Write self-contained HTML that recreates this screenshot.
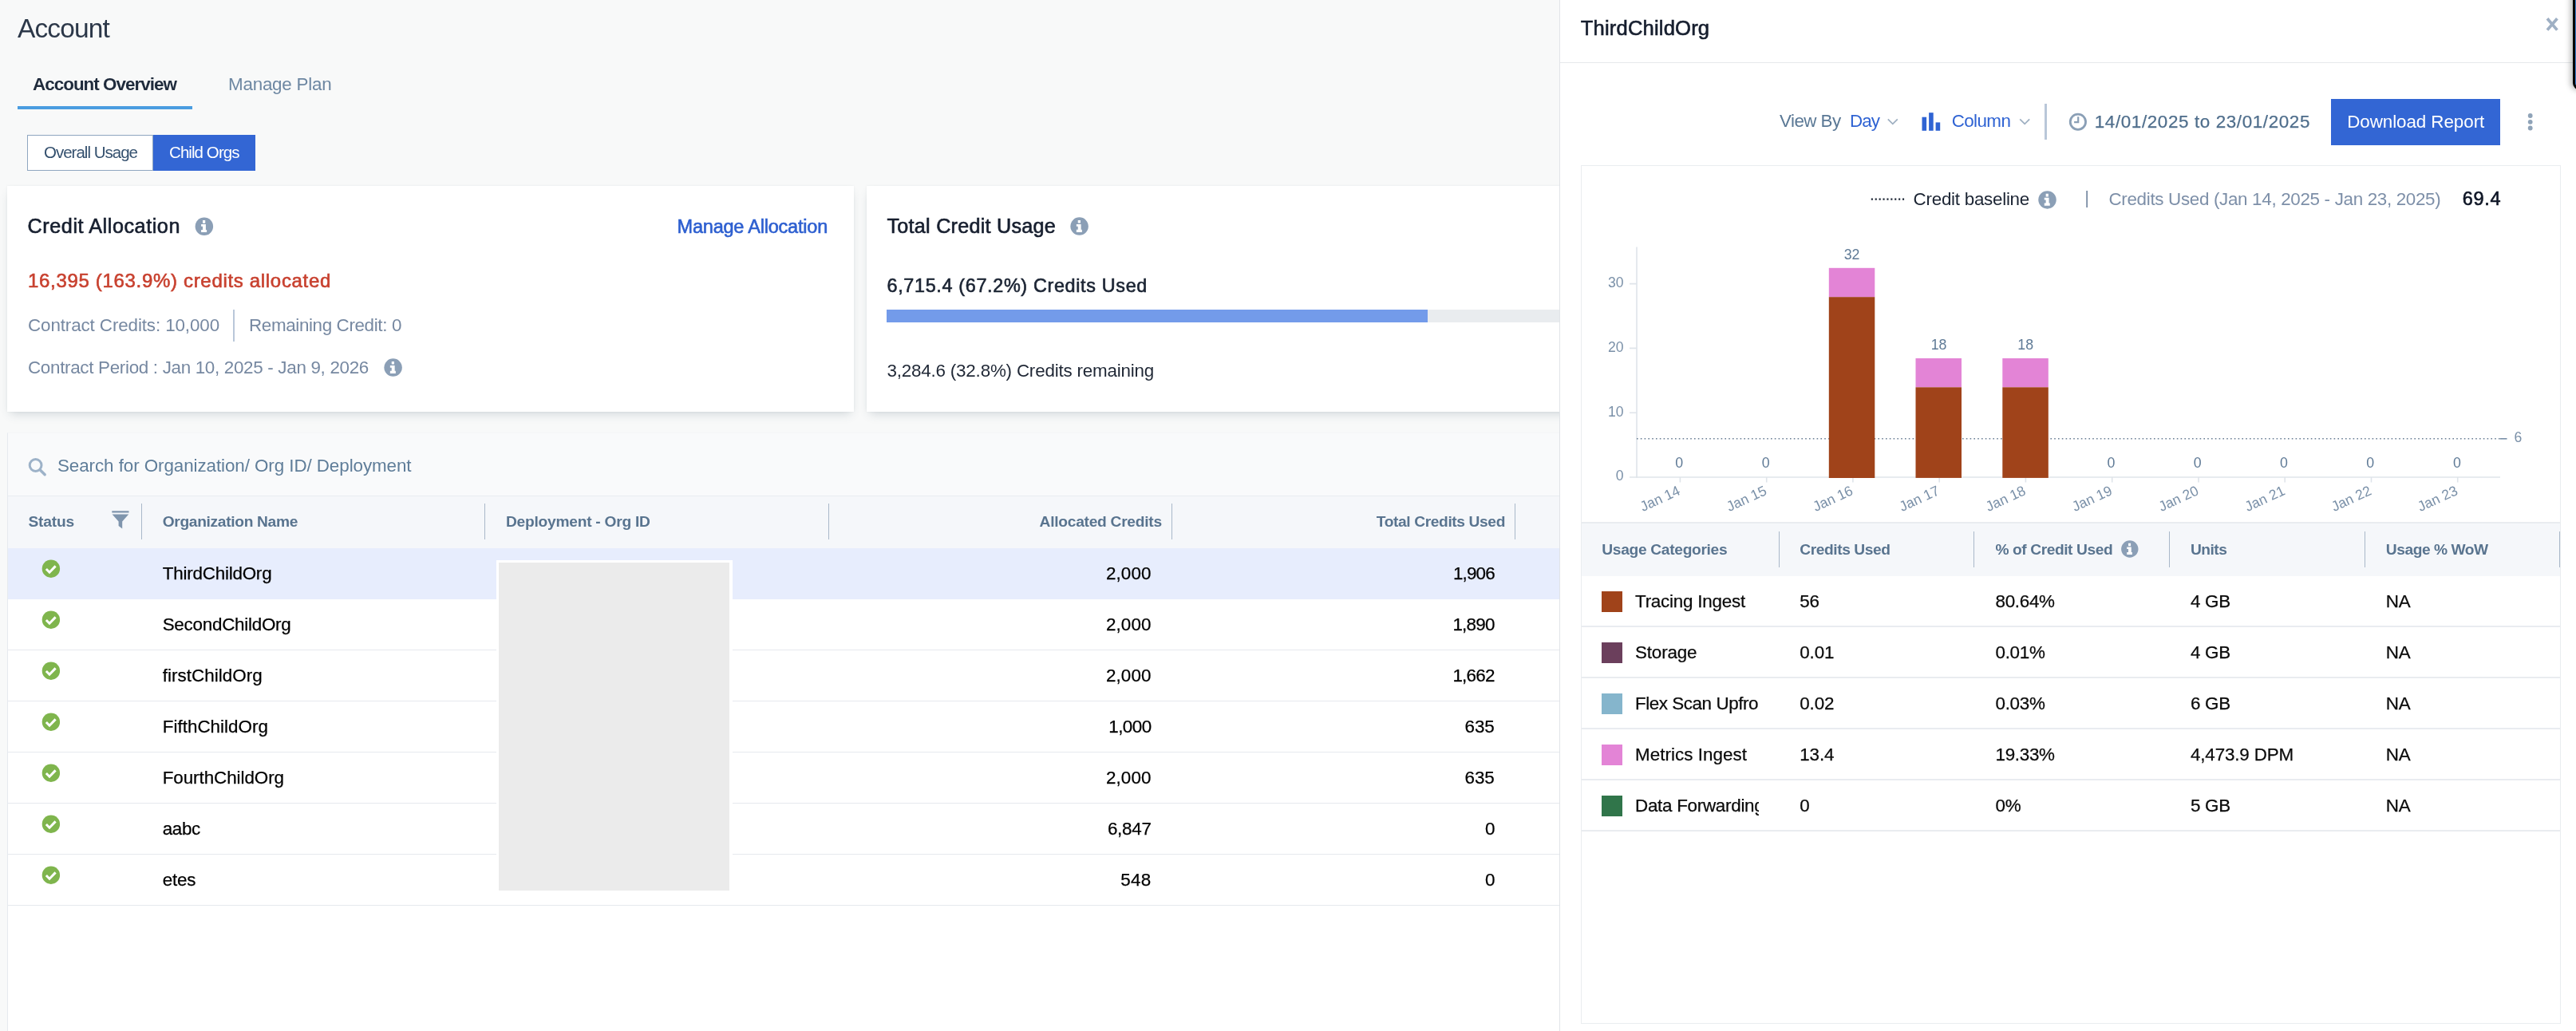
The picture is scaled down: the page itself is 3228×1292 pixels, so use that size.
<!DOCTYPE html>
<html><head><meta charset="utf-8"><title>Account</title>
<style>
html,body{margin:0;padding:0;width:3228px;height:1292px;overflow:hidden;}
body{width:3228px;height:1292px;position:relative;overflow:hidden;background:#f8f9f9;font-family:"Liberation Sans",sans-serif;}
.a{position:absolute;}
.t{position:absolute;white-space:nowrap;font-family:"Liberation Sans",sans-serif;}
svg{position:absolute;overflow:visible;}
.card{position:absolute;background:#fff;box-shadow:0 6px 12px -4px rgba(60,80,100,0.22),0 0 3px rgba(60,80,100,0.07);}
.hl{position:absolute;height:1px;background:#e6e9ee;}
.vd{position:absolute;width:1px;background:#a9b8c9;}
#wrap{position:absolute;left:0;top:0;width:3228px;height:1292px;overflow:hidden;will-change:transform;}

</style></head>
<body>
<div id="wrap">
<!-- tabs -->
<div class="a" style="left:22px;top:133px;width:219px;height:4px;background:#4a9de0;"></div>
<!-- toggle -->
<div class="a" style="left:34px;top:169px;width:157.5px;height:44.5px;box-sizing:border-box;border:1.6px solid #8fa6c0;background:#fff;"></div>
<div class="a" style="left:191.5px;top:169px;width:128px;height:44.5px;background:#3366d4;"></div>
<!-- cards -->
<div class="card" style="left:9px;top:233px;width:1061px;height:283px;"></div>
<div class="card" style="left:1086px;top:233px;width:900px;height:283px;"></div>
<!-- card1 divider -->
<div class="a" style="left:291.8px;top:388px;width:2.6px;height:39.5px;background:#b9c7d9;"></div>
<!-- progress -->
<div class="a" style="left:1111px;top:388px;width:850px;height:15.5px;background:#e9ecef;"></div>
<div class="a" style="left:1111px;top:388px;width:678px;height:15.5px;background:#739bea;"></div>
<!-- table -->
<div class="a" style="left:9px;top:542px;width:1950px;height:750px;background:#f9fafb;border-left:1px solid #e6eaef;border-top:1px solid #f5f6f8;"></div>
<div class="a" style="left:10px;top:621px;width:1950px;height:66px;background:#f5f7fa;border-top:1.6px solid #e9ecf0;box-sizing:border-box;"></div>
<div class="a" style="left:10px;top:687px;width:1950px;height:605px;background:#fff;"></div>
<div class="a" style="left:10px;top:687px;width:1950px;height:64px;background:#e7edfd;"></div>
<div class="hl" style="left:10px;top:814px;width:1950px;"></div>
<div class="hl" style="left:10px;top:878px;width:1950px;"></div>
<div class="hl" style="left:10px;top:942px;width:1950px;"></div>
<div class="hl" style="left:10px;top:1006px;width:1950px;"></div>
<div class="hl" style="left:10px;top:1070px;width:1950px;"></div>
<div class="hl" style="left:10px;top:1134px;width:1950px;"></div>
<!-- header dividers -->
<div class="vd" style="left:176.5px;top:631px;height:45px;"></div>
<div class="vd" style="left:606.8px;top:631px;height:45px;"></div>
<div class="vd" style="left:1037.5px;top:631px;height:45px;"></div>
<div class="vd" style="left:1467.5px;top:631px;height:45px;"></div>
<div class="vd" style="left:1897.8px;top:631px;height:45px;"></div>
<!-- redaction box -->
<div class="a" style="left:621.5px;top:702px;width:296px;height:417px;background:#fff;"></div>
<div class="a" style="left:625px;top:705px;width:289px;height:411px;background:#ebebeb;"></div>

<!-- right panel -->
<div class="a" style="left:1954px;top:0;width:1275px;height:1292px;background:#fff;border-left:1px solid #e1e4e8;"></div>
<div class="hl" style="left:1955px;top:77.7px;width:1269px;background:#e6e9ec;"></div>
<!-- dark corner artifact -->
<div class="a" style="left:3224px;top:-20px;width:30px;height:133px;box-sizing:border-box;background:#3b7fd0;border:3px solid #000;border-radius:9px;box-shadow:-3px 0 7px rgba(0,0,0,0.28);"></div>
<!-- toolbar divider -->
<div class="a" style="left:2562px;top:130.4px;width:2.6px;height:44.2px;background:#b9c7d9;"></div>
<!-- button -->
<div class="a" style="left:2921px;top:124px;width:212px;height:57.8px;background:#3366d4;"></div>
<!-- chart box -->
<div class="a" style="left:1981px;top:207px;width:1227.5px;height:1075.5px;box-sizing:border-box;border:1px solid #eaedf0;background:#fff;"></div>
<!-- panel table -->
<div class="a" style="left:1982px;top:654px;width:1225.5px;height:67.5px;background:#f5f7fa;border-top:2px solid #e9ecf0;box-sizing:border-box;"></div>
<div class="vd" style="left:2228.7px;top:666px;height:44.5px;"></div>
<div class="vd" style="left:2473.4px;top:666px;height:44.5px;"></div>
<div class="vd" style="left:2718.1px;top:666px;height:44.5px;"></div>
<div class="vd" style="left:2962.8px;top:666px;height:44.5px;"></div>
<div class="vd" style="left:3207px;top:666px;height:44.5px;"></div>
<div class="hl" style="left:1982px;top:784px;width:1225.5px;height:2px;background:#e9ecf0;"></div>
<div class="hl" style="left:1982px;top:848px;width:1225.5px;height:2px;background:#e9ecf0;"></div>
<div class="hl" style="left:1982px;top:912px;width:1225.5px;height:2px;background:#e9ecf0;"></div>
<div class="hl" style="left:1982px;top:976px;width:1225.5px;height:2px;background:#e9ecf0;"></div>
<div class="hl" style="left:1982px;top:1040px;width:1225.5px;height:2px;background:#e9ecf0;"></div>
<div class="a" style="left:2006.8px;top:741px;width:26px;height:26px;background:#a0431a;"></div>
<div class="a" style="left:2006.8px;top:805px;width:26px;height:26px;background:#6b3f5c;"></div>
<div class="a" style="left:2006.8px;top:869px;width:26px;height:26px;background:#85b5cc;"></div>
<div class="a" style="left:2006.8px;top:933px;width:26px;height:26px;background:#e384d6;"></div>
<div class="a" style="left:2006.8px;top:997px;width:26px;height:26px;background:#30754a;"></div>

<!-- main svg: icons + chart -->
<svg width="3228" height="1292" viewBox="0 0 3228 1292" style="left:0;top:0;">
<defs>
 <g id="info"><circle r="11.25" fill="#8b9fb6"/><path d="M-3.75 -2.6H2.05V4.2H3.25V7.4H-3.75V4.2H-1.85V0.1H-3.75ZM-1.85 -7.7H1.35V-4H-1.85Z" fill="#fff"/></g>
 <g id="chk"><circle r="11.2" fill="#7fb54d"/><path d="M-6 0.3l4.1 4.2 7.6-7.8" fill="none" stroke="#fff" stroke-width="3"/></g>
 <g id="chev"><path d="M-6 -3.2l6 6 6-6" fill="none" stroke="#9fb0c2" stroke-width="1.8"/></g>
</defs>
<use href="#info" x="255.85" y="283.7"/>
<use href="#info" x="492.6" y="460.6"/>
<use href="#info" x="1352.6" y="283.6"/>
<use href="#info" x="2565.5" y="250.4"/>
<use href="#info" x="2668.8" y="688" transform="translate(2668.8 688) scale(0.95) translate(-2668.8 -688)"/>
<!-- search icon -->
<circle cx="44.6" cy="583" r="7.4" fill="none" stroke="#9db2c8" stroke-width="3"/>
<path d="M50.4 589l5.8 5.8" stroke="#9db2c8" stroke-width="3.4" stroke-linecap="round"/>
<!-- filter icon -->
<path d="M140.3 640.2h21.2v2.2h-21.2zM140.6 644.4h20.6l-8 9v9.2l-4.6-3.6v-5.6z" fill="#7f95ad"/>
<!-- checks -->
<use href="#chk" x="63.9" y="712.7"/>
<use href="#chk" x="63.9" y="776.7"/>
<use href="#chk" x="63.9" y="840.7"/>
<use href="#chk" x="63.9" y="904.7"/>
<use href="#chk" x="63.9" y="968.7"/>
<use href="#chk" x="63.9" y="1032.7"/>
<use href="#chk" x="63.9" y="1096.7"/>
<!-- close X -->
<path d="M3192 23.2l12.4 14.4M3204.4 23.2l-12.4 14.4" stroke="#9fb0c4" stroke-width="3.7"/>
<!-- chevrons -->
<use href="#chev" x="2371.8" y="152.5"/>
<use href="#chev" x="2537.2" y="152.5"/>
<!-- column icon -->
<rect x="2408.5" y="146.7" width="5.6" height="17.1" fill="#2f63d3"/>
<rect x="2417.1" y="141.2" width="5.6" height="22.6" fill="#2f63d3"/>
<rect x="2425.6" y="153.4" width="5.6" height="10.4" fill="#2f63d3"/>
<!-- clock -->
<circle cx="2603.9" cy="152.7" r="9.65" fill="none" stroke="#8a9fb6" stroke-width="2.8"/>
<path d="M2604.2 146.3V153.1H2599.1" fill="none" stroke="#8a9fb6" stroke-width="2.2"/>
<!-- kebab -->
<circle cx="3170.7" cy="145" r="2.9" fill="#8fa3b8"/><circle cx="3170.7" cy="152.8" r="2.9" fill="#8fa3b8"/><circle cx="3170.7" cy="160.5" r="2.9" fill="#8fa3b8"/>
<!-- legend -->
<path d="M2344.8 249.6H2386.5" stroke="#1b2433" stroke-width="2.2" stroke-dasharray="2.1 2.8"/>
<rect x="2614.3" y="239" width="1.7" height="21" fill="#7688a1"/>
<!-- chart -->
<g id="chart">
<path d="M2051 309.5V598.8" stroke="#dfe4ea" stroke-width="1.6"/>
<path d="M2042 598H3133" stroke="#dfe4ea" stroke-width="1.6"/>
<path d="M2042 355.6h9M2042 436.4h9M2042 517.2h9" stroke="#dfe4ea" stroke-width="1.6"/>
<g stroke="#dfe4ea" stroke-width="1.6"><path d="M2105.4 598v6.5M2213.7 598v6.5M2321.9 598v6.5M2430.2 598v6.5M2538.4 598v6.5M2646.7 598v6.5M2755.0 598v6.5M2863.2 598v6.5M2971.5 598v6.5M3079.7 598v6.5"/></g>
<path d="M2051 549.8H3133" stroke="#6b7f95" stroke-width="1.5" stroke-dasharray="1.6 3.2"/>
<path d="M3133 549.8h8.5" stroke="#7a90a8" stroke-width="1.6"/>
<rect x="2291.8" y="335.8" width="57.5" height="36.4" fill="#e384d6"/>
<rect x="2291.8" y="372.2" width="57.5" height="226.8" fill="#a0431a"/>
<rect x="2400.5" y="449" width="57.5" height="36.3" fill="#e384d6"/>
<rect x="2400.5" y="485.3" width="57.5" height="113.6" fill="#a0431a"/>
<rect x="2509.3" y="449" width="57.5" height="36.3" fill="#e384d6"/>
<rect x="2509.3" y="485.3" width="57.5" height="113.6" fill="#a0431a"/>
<g font-family="Liberation Sans, sans-serif" font-size="17.8" fill="#5f7a96" text-anchor="middle">
<text x="2320.6" y="324.8">32</text><text x="2429.6" y="437.8">18</text><text x="2538.2" y="437.8">18</text>
<text x="2104.3" y="586">0</text><text x="2212.8" y="586">0</text>
<text x="2645.4" y="586">0</text><text x="2753.7" y="586">0</text><text x="2861.9" y="586">0</text><text x="2970.2" y="586">0</text><text x="3078.9" y="586">0</text>
</g>
<g font-family="Liberation Sans, sans-serif" font-size="17.6" fill="#7a90a8" text-anchor="end">
<text transform="translate(2106.7 619) rotate(-25)">Jan 14</text>
<text transform="translate(2215.0 619) rotate(-25)">Jan 15</text>
<text transform="translate(2323.2 619) rotate(-25)">Jan 16</text>
<text transform="translate(2431.5 619) rotate(-25)">Jan 17</text>
<text transform="translate(2539.7 619) rotate(-25)">Jan 18</text>
<text transform="translate(2648.0 619) rotate(-25)">Jan 19</text>
<text transform="translate(2756.3 619) rotate(-25)">Jan 20</text>
<text transform="translate(2864.5 619) rotate(-25)">Jan 21</text>
<text transform="translate(2972.8 619) rotate(-25)">Jan 22</text>
<text transform="translate(3081.0 619) rotate(-25)">Jan 23</text>
</g>
</g>
</svg>

<span class="t" id="t0" style="font-size:33.5px;line-height:33.5px;top:18.94px;color:#2c3849;letter-spacing:-0.864px;left:22.00px;">Account</span>
<span class="t" id="t1" style="font-size:22.4px;line-height:22.4px;top:95.24px;color:#1f2b3c;font-weight:700;letter-spacing:-0.961px;left:41.00px;">Account Overview</span>
<span class="t" id="t2" style="font-size:22.4px;line-height:22.4px;top:95.24px;color:#6d87a2;letter-spacing:-0.223px;left:286.00px;">Manage Plan</span>
<span class="t" id="t3" style="font-size:20.5px;line-height:20.5px;top:180.95px;color:#34506e;letter-spacing:-0.992px;left:55.00px;">Overall Usage</span>
<span class="t" id="t4" style="font-size:20.5px;line-height:20.5px;top:180.95px;color:#ffffff;letter-spacing:-0.924px;left:212.00px;">Child Orgs</span>
<span class="t" id="t5" style="font-size:25.2px;line-height:25.2px;top:271.47px;color:#161e2e;-webkit-text-stroke:0.62px #161e2e;letter-spacing:0.552px;left:34.60px;">Credit Allocation</span>
<span class="t" id="t6" style="font-size:23.5px;line-height:23.5px;top:272.71px;color:#2d5fd0;-webkit-text-stroke:0.62px #2d5fd0;letter-spacing:-0.215px;left:848.60px;">Manage Allocation</span>
<span class="t" id="t7" style="font-size:24px;line-height:24px;top:340.28px;color:#c8412f;-webkit-text-stroke:0.62px #c8412f;letter-spacing:0.680px;left:35.00px;">16,395 (163.9%) credits allocated</span>
<span class="t" id="t8" style="font-size:22.4px;line-height:22.4px;top:397.34px;color:#7688a1;letter-spacing:-0.113px;left:35.00px;">Contract Credits: 10,000</span>
<span class="t" id="t9" style="font-size:22.4px;line-height:22.4px;top:397.34px;color:#7688a1;letter-spacing:-0.363px;left:312.00px;">Remaining Credit: 0</span>
<span class="t" id="t10" style="font-size:22.4px;line-height:22.4px;top:449.84px;color:#7688a1;letter-spacing:-0.310px;left:35.00px;">Contract Period : Jan 10, 2025 - Jan 9, 2026</span>
<span class="t" id="t11" style="font-size:25.2px;line-height:25.2px;top:271.47px;color:#161e2e;-webkit-text-stroke:0.62px #161e2e;letter-spacing:0.239px;left:1111.50px;">Total Credit Usage</span>
<span class="t" id="t12" style="font-size:23.4px;line-height:23.4px;top:346.99px;color:#1b2433;-webkit-text-stroke:0.62px #1b2433;letter-spacing:0.656px;left:1111.50px;">6,715.4 (67.2%) Credits Used</span>
<span class="t" id="t13" style="font-size:22.4px;line-height:22.4px;top:454.34px;color:#1f2735;letter-spacing:-0.197px;left:1111.50px;">3,284.6 (32.8%) Credits remaining</span>
<span class="t" id="t14" style="font-size:22.4px;line-height:22.4px;top:573.24px;color:#5f7d99;letter-spacing:-0.076px;left:72.00px;">Search for Organization/ Org ID/ Deployment</span>
<span class="t" id="t15" style="font-size:19.2px;line-height:19.2px;top:643.85px;color:#59748f;font-weight:700;letter-spacing:-0.190px;left:35.50px;">Status</span>
<span class="t" id="t16" style="font-size:19.2px;line-height:19.2px;top:643.85px;color:#59748f;font-weight:700;letter-spacing:-0.327px;left:203.70px;">Organization Name</span>
<span class="t" id="t17" style="font-size:19.2px;line-height:19.2px;top:643.85px;color:#59748f;font-weight:700;letter-spacing:-0.253px;left:634.00px;">Deployment - Org ID</span>
<span class="t" id="t18" style="font-size:19.2px;line-height:19.2px;top:643.85px;color:#59748f;font-weight:700;letter-spacing:-0.271px;left:1302.60px;">Allocated Credits</span>
<span class="t" id="t19" style="font-size:19.2px;line-height:19.2px;top:643.85px;color:#59748f;font-weight:700;letter-spacing:-0.384px;left:1724.80px;">Total Credits Used</span>
<span class="t" id="t20" style="font-size:22.4px;line-height:22.4px;top:707.64px;color:#000;-webkit-text-stroke:0.25px #000;letter-spacing:-0.206px;left:203.70px;">ThirdChildOrg</span>
<span class="t" id="t21" style="font-size:22.4px;line-height:22.4px;top:707.64px;color:#000;-webkit-text-stroke:0.25px #000;letter-spacing:0.131px;left:1385.90px;">2,000</span>
<span class="t" id="t22" style="font-size:22.4px;line-height:22.4px;top:707.64px;color:#000;-webkit-text-stroke:0.25px #000;letter-spacing:-0.849px;left:1821.00px;">1,906</span>
<span class="t" id="t23" style="font-size:22.4px;line-height:22.4px;top:771.64px;color:#000;-webkit-text-stroke:0.25px #000;letter-spacing:-0.250px;left:203.70px;">SecondChildOrg</span>
<span class="t" id="t24" style="font-size:22.4px;line-height:22.4px;top:771.64px;color:#000;-webkit-text-stroke:0.25px #000;letter-spacing:0.131px;left:1385.90px;">2,000</span>
<span class="t" id="t25" style="font-size:22.4px;line-height:22.4px;top:771.64px;color:#000;-webkit-text-stroke:0.25px #000;letter-spacing:-0.729px;left:1820.40px;">1,890</span>
<span class="t" id="t26" style="font-size:22.4px;line-height:22.4px;top:835.64px;color:#000;-webkit-text-stroke:0.25px #000;letter-spacing:0.044px;left:203.70px;">firstChildOrg</span>
<span class="t" id="t27" style="font-size:22.4px;line-height:22.4px;top:835.64px;color:#000;-webkit-text-stroke:0.25px #000;letter-spacing:0.131px;left:1385.90px;">2,000</span>
<span class="t" id="t28" style="font-size:22.4px;line-height:22.4px;top:835.64px;color:#000;-webkit-text-stroke:0.25px #000;letter-spacing:-0.729px;left:1820.40px;">1,662</span>
<span class="t" id="t29" style="font-size:22.4px;line-height:22.4px;top:899.64px;color:#000;-webkit-text-stroke:0.25px #000;letter-spacing:0.030px;left:203.70px;">FifthChildOrg</span>
<span class="t" id="t30" style="font-size:22.4px;line-height:22.4px;top:899.64px;color:#000;-webkit-text-stroke:0.25px #000;letter-spacing:-0.549px;left:1389.30px;">1,000</span>
<span class="t" id="t31" style="font-size:22.4px;line-height:22.4px;top:899.64px;color:#000;-webkit-text-stroke:0.25px #000;letter-spacing:-0.020px;left:1835.50px;">635</span>
<span class="t" id="t32" style="font-size:22.4px;line-height:22.4px;top:963.64px;color:#000;-webkit-text-stroke:0.25px #000;letter-spacing:-0.054px;left:203.70px;">FourthChildOrg</span>
<span class="t" id="t33" style="font-size:22.4px;line-height:22.4px;top:963.64px;color:#000;-webkit-text-stroke:0.25px #000;letter-spacing:0.131px;left:1385.90px;">2,000</span>
<span class="t" id="t34" style="font-size:22.4px;line-height:22.4px;top:963.64px;color:#000;-webkit-text-stroke:0.25px #000;letter-spacing:-0.020px;left:1835.50px;">635</span>
<span class="t" id="t35" style="font-size:22.4px;line-height:22.4px;top:1027.64px;color:#000;-webkit-text-stroke:0.25px #000;letter-spacing:-0.316px;left:203.70px;">aabc</span>
<span class="t" id="t36" style="font-size:22.4px;line-height:22.4px;top:1027.64px;color:#000;-webkit-text-stroke:0.25px #000;letter-spacing:-0.269px;left:1387.90px;">6,847</span>
<span class="t" id="t37" style="font-size:22.4px;line-height:22.4px;top:1027.64px;color:#000;-webkit-text-stroke:0.25px #000;letter-spacing:-0.553px;left:1860.90px;">0</span>
<span class="t" id="t38" style="font-size:22.4px;line-height:22.4px;top:1091.64px;color:#000;-webkit-text-stroke:0.25px #000;letter-spacing:-0.182px;left:203.70px;">etes</span>
<span class="t" id="t39" style="font-size:22.4px;line-height:22.4px;top:1091.64px;color:#000;-webkit-text-stroke:0.25px #000;letter-spacing:0.347px;left:1404.20px;">548</span>
<span class="t" id="t40" style="font-size:22.4px;line-height:22.4px;top:1091.64px;color:#000;-webkit-text-stroke:0.25px #000;letter-spacing:-0.553px;left:1860.90px;">0</span>
<span class="t" id="t41" style="font-size:25.6px;line-height:25.6px;top:23.43px;color:#161e2e;-webkit-text-stroke:0.62px #161e2e;letter-spacing:0.176px;left:1980.70px;">ThirdChildOrg</span>
<span class="t" id="t42" style="font-size:22.4px;line-height:22.4px;top:140.54px;color:#5a7895;letter-spacing:-0.555px;left:2230.00px;">View By</span>
<span class="t" id="t43" style="font-size:22.4px;line-height:22.4px;top:140.54px;color:#2f63d3;letter-spacing:-0.943px;left:2318.00px;">Day</span>
<span class="t" id="t44" style="font-size:22.4px;line-height:22.4px;top:140.54px;color:#2f63d3;letter-spacing:-0.593px;left:2445.70px;">Column</span>
<span class="t" id="t45" style="font-size:22.4px;line-height:22.4px;top:141.84px;color:#4f6e8c;-webkit-text-stroke:0.25px #4f6e8c;letter-spacing:0.623px;left:2624.80px;">14/01/2025 to 23/01/2025</span>
<span class="t" id="t46" style="font-size:22.4px;line-height:22.4px;top:141.84px;color:#fff;letter-spacing:-0.068px;left:2941.20px;">Download Report</span>
<span class="t" id="t47" style="font-size:22.4px;line-height:22.4px;top:238.54px;color:#1b2433;letter-spacing:-0.264px;left:2397.60px;">Credit baseline</span>
<span class="t" id="t48" style="font-size:22.4px;line-height:22.4px;top:238.64px;color:#7d8fa8;letter-spacing:-0.322px;left:2642.50px;">Credits Used (Jan 14, 2025 - Jan 23, 2025)</span>
<span class="t" id="t49" style="font-size:23.5px;line-height:23.5px;top:238.41px;color:#0f1626;-webkit-text-stroke:0.62px #0f1626;letter-spacing:0.738px;left:3085.70px;">69.4</span>
<span class="t" id="t50" style="font-size:19.2px;line-height:19.2px;top:679.35px;color:#59748f;font-weight:700;letter-spacing:-0.318px;left:2007.30px;">Usage Categories</span>
<span class="t" id="t51" style="font-size:19.2px;line-height:19.2px;top:679.35px;color:#59748f;font-weight:700;letter-spacing:-0.422px;left:2255.30px;">Credits Used</span>
<span class="t" id="t52" style="font-size:19.2px;line-height:19.2px;top:679.35px;color:#59748f;font-weight:700;letter-spacing:-0.427px;left:2500.50px;">% of Credit Used</span>
<span class="t" id="t53" style="font-size:19.2px;line-height:19.2px;top:679.35px;color:#59748f;font-weight:700;letter-spacing:-0.514px;left:2745.00px;">Units</span>
<span class="t" id="t54" style="font-size:19.2px;line-height:19.2px;top:679.35px;color:#59748f;font-weight:700;letter-spacing:-0.447px;left:2989.80px;">Usage % WoW</span>
<span class="t" id="t55" style="font-size:22.4px;line-height:22.4px;top:743.44px;color:#0a0a0a;-webkit-text-stroke:0.25px #0a0a0a;letter-spacing:-0.218px;left:2049.00px;width:154.7px;overflow:hidden;">Tracing Ingest</span>
<span class="t" id="t56" style="font-size:22.4px;line-height:22.4px;top:743.44px;color:#0a0a0a;-webkit-text-stroke:0.25px #0a0a0a;left:2255.30px;letter-spacing:-0.15px;">56</span>
<span class="t" id="t57" style="font-size:22.4px;line-height:22.4px;top:743.44px;color:#0a0a0a;-webkit-text-stroke:0.25px #0a0a0a;left:2500.50px;letter-spacing:-0.3px;">80.64%</span>
<span class="t" id="t58" style="font-size:22.4px;line-height:22.4px;top:743.44px;color:#0a0a0a;-webkit-text-stroke:0.25px #0a0a0a;left:2745.00px;letter-spacing:-0.3px;">4 GB</span>
<span class="t" id="t59" style="font-size:22.4px;line-height:22.4px;top:743.44px;color:#0a0a0a;-webkit-text-stroke:0.25px #0a0a0a;left:2989.80px;letter-spacing:-0.3px;">NA</span>
<span class="t" id="t60" style="font-size:22.4px;line-height:22.4px;top:807.44px;color:#0a0a0a;-webkit-text-stroke:0.25px #0a0a0a;letter-spacing:-0.148px;left:2049.00px;width:154.7px;overflow:hidden;">Storage</span>
<span class="t" id="t61" style="font-size:22.4px;line-height:22.4px;top:807.44px;color:#0a0a0a;-webkit-text-stroke:0.25px #0a0a0a;left:2255.30px;letter-spacing:-0.15px;">0.01</span>
<span class="t" id="t62" style="font-size:22.4px;line-height:22.4px;top:807.44px;color:#0a0a0a;-webkit-text-stroke:0.25px #0a0a0a;left:2500.50px;letter-spacing:-0.3px;">0.01%</span>
<span class="t" id="t63" style="font-size:22.4px;line-height:22.4px;top:807.44px;color:#0a0a0a;-webkit-text-stroke:0.25px #0a0a0a;left:2745.00px;letter-spacing:-0.3px;">4 GB</span>
<span class="t" id="t64" style="font-size:22.4px;line-height:22.4px;top:807.44px;color:#0a0a0a;-webkit-text-stroke:0.25px #0a0a0a;left:2989.80px;letter-spacing:-0.3px;">NA</span>
<span class="t" id="t65" style="font-size:22.4px;line-height:22.4px;top:871.44px;color:#0a0a0a;-webkit-text-stroke:0.25px #0a0a0a;letter-spacing:-0.435px;left:2049.00px;width:154.7px;overflow:hidden;">Flex Scan Upfront</span>
<span class="t" id="t66" style="font-size:22.4px;line-height:22.4px;top:871.44px;color:#0a0a0a;-webkit-text-stroke:0.25px #0a0a0a;left:2255.30px;letter-spacing:-0.15px;">0.02</span>
<span class="t" id="t67" style="font-size:22.4px;line-height:22.4px;top:871.44px;color:#0a0a0a;-webkit-text-stroke:0.25px #0a0a0a;left:2500.50px;letter-spacing:-0.3px;">0.03%</span>
<span class="t" id="t68" style="font-size:22.4px;line-height:22.4px;top:871.44px;color:#0a0a0a;-webkit-text-stroke:0.25px #0a0a0a;left:2745.00px;letter-spacing:-0.3px;">6 GB</span>
<span class="t" id="t69" style="font-size:22.4px;line-height:22.4px;top:871.44px;color:#0a0a0a;-webkit-text-stroke:0.25px #0a0a0a;left:2989.80px;letter-spacing:-0.3px;">NA</span>
<span class="t" id="t70" style="font-size:22.4px;line-height:22.4px;top:935.44px;color:#0a0a0a;-webkit-text-stroke:0.25px #0a0a0a;letter-spacing:0.038px;left:2049.00px;width:154.7px;overflow:hidden;">Metrics Ingest</span>
<span class="t" id="t71" style="font-size:22.4px;line-height:22.4px;top:935.44px;color:#0a0a0a;-webkit-text-stroke:0.25px #0a0a0a;left:2255.30px;letter-spacing:-0.15px;">13.4</span>
<span class="t" id="t72" style="font-size:22.4px;line-height:22.4px;top:935.44px;color:#0a0a0a;-webkit-text-stroke:0.25px #0a0a0a;left:2500.50px;letter-spacing:-0.3px;">19.33%</span>
<span class="t" id="t73" style="font-size:22.4px;line-height:22.4px;top:935.44px;color:#0a0a0a;-webkit-text-stroke:0.25px #0a0a0a;letter-spacing:-0.154px;left:2745.00px;">4,473.9 DPM</span>
<span class="t" id="t74" style="font-size:22.4px;line-height:22.4px;top:935.44px;color:#0a0a0a;-webkit-text-stroke:0.25px #0a0a0a;left:2989.80px;letter-spacing:-0.3px;">NA</span>
<span class="t" id="t75" style="font-size:22.4px;line-height:22.4px;top:999.44px;color:#0a0a0a;-webkit-text-stroke:0.25px #0a0a0a;letter-spacing:-0.268px;left:2049.00px;width:154.7px;overflow:hidden;">Data Forwarding</span>
<span class="t" id="t76" style="font-size:22.4px;line-height:22.4px;top:999.44px;color:#0a0a0a;-webkit-text-stroke:0.25px #0a0a0a;left:2255.30px;letter-spacing:-0.15px;">0</span>
<span class="t" id="t77" style="font-size:22.4px;line-height:22.4px;top:999.44px;color:#0a0a0a;-webkit-text-stroke:0.25px #0a0a0a;left:2500.50px;letter-spacing:-0.3px;">0%</span>
<span class="t" id="t78" style="font-size:22.4px;line-height:22.4px;top:999.44px;color:#0a0a0a;-webkit-text-stroke:0.25px #0a0a0a;left:2745.00px;letter-spacing:-0.3px;">5 GB</span>
<span class="t" id="t79" style="font-size:22.4px;line-height:22.4px;top:999.44px;color:#0a0a0a;-webkit-text-stroke:0.25px #0a0a0a;left:2989.80px;letter-spacing:-0.3px;">NA</span>
<span class="t" id="t80" style="font-size:17.6px;line-height:17.6px;top:346.30px;color:#7a90a8;left:2014.92px;">30</span>
<span class="t" id="t81" style="font-size:17.6px;line-height:17.6px;top:427.30px;color:#7a90a8;left:2014.92px;">20</span>
<span class="t" id="t82" style="font-size:17.6px;line-height:17.6px;top:508.30px;color:#7a90a8;left:2014.92px;">10</span>
<span class="t" id="t83" style="font-size:17.6px;line-height:17.6px;top:588.30px;color:#7a90a8;left:2024.70px;">0</span>
<span class="t" id="t84" style="font-size:17.6px;line-height:17.6px;top:539.70px;color:#7a90a8;left:3150.60px;">6</span>
</div>
</body></html>
